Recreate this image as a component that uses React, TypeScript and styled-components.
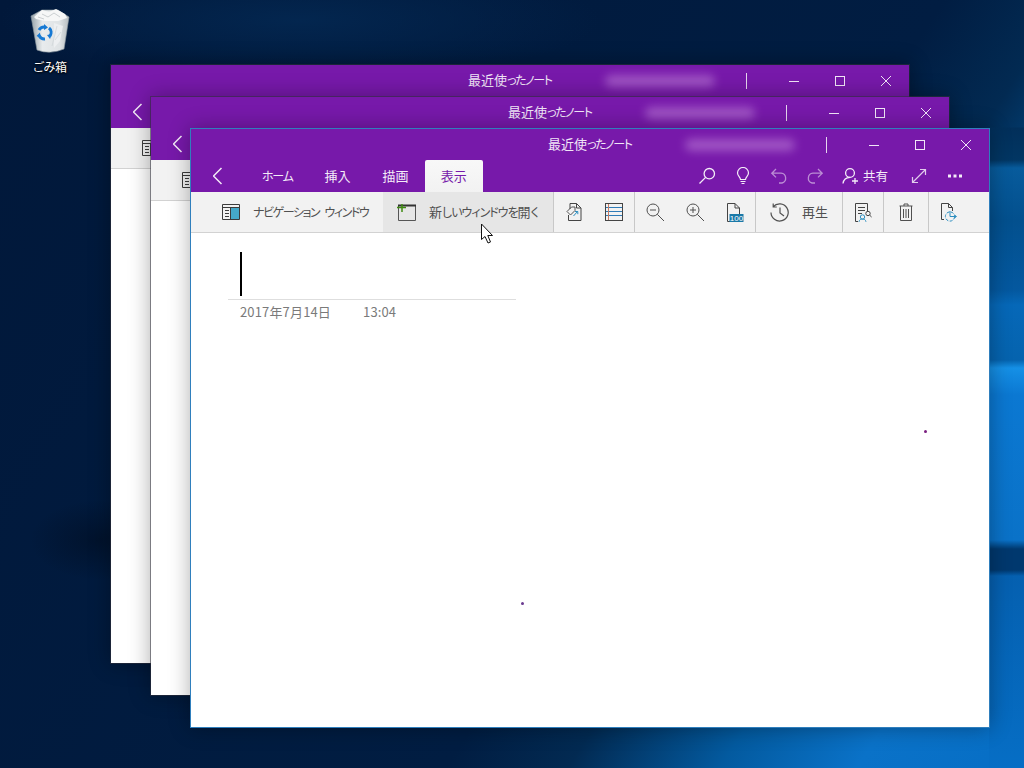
import React from 'react';
import styled, {createGlobalStyle} from 'styled-components';

const GlobalStyle = createGlobalStyle`
  html, body {
    margin: 0;
    padding: 0;
    overflow: hidden;
  }
  body {
    font-family: "Noto Sans CJK JP", "Liberation Sans", sans-serif;
    font-feature-settings: "palt";
  }
`

const PURPLE = '#7719aa'

const Desktop = styled.div`
  position: relative;
  width: 1024px;
  height: 768px;
  overflow: hidden;
  background:
    linear-gradient(180deg, transparent 127px, #022f5a 128px, #023663 160px, #075b9c 168px, #03508e 220px, #04589f 290px, #0668b8 305px, #0563ae 360px, #1590e6 368px, #0b78d2 395px, #0a72c8 540px, #00386e 549px, #00386e 570px, #0560b0 576px, #066ec5 768px) right top / 35px 100% no-repeat,
    radial-gradient(ellipse 70px 40px at 100px 540px, rgba(0, 12, 30, .55) 0%, transparent 100%),
    radial-gradient(ellipse 300px 60px at 300px 20px, #03264f 0%, transparent 100%),
    linear-gradient(123deg, #01183a 0%, #011d42 62%, #022a52 70%, #035a9f 80%, #0a72c8 89%, #066ec5 100%);
`

const BinShortcut = styled.div`
  position: absolute;
  left: 24px;
  top: 8px;
  width: 52px;
  display: flex;
  flex-direction: column;
  align-items: center;
`

const BinLabel = styled.span`
  margin-top: 6px;
  font-size: 12px;
  line-height: 16px;
  letter-spacing: -.2px;
  color: #fff;
  text-shadow: 0 1px 2px #000, 0 0 2px #000;
`

const WindowFrame = styled.div<{$left: number; $top: number; $active?: boolean}>`
  position: absolute;
  left: ${p => p.$left}px;
  top: ${p => p.$top}px;
  width: 800px;
  height: 600px;
  box-sizing: border-box;
  display: flex;
  flex-direction: column;
  border: 1px solid ${p => p.$active ? '#2f7fbd' : 'rgba(50, 50, 60, .55)'};
  box-shadow: 0 0 20px rgba(0, 0, 0, .32);
  background: #fff;
  background-clip: padding-box;
`

// narrower kana next to the 13px kanji, the way the original UI font sets them
const Kana = styled.span<{$track: number}>`
  font-size: 12px;
  letter-spacing: ${p => p.$track}px;
  word-spacing: 4px;
`

const TitleBar = styled.div`
  height: 31px;
  flex: none;
  display: flex;
  align-items: center;
  background: ${PURPLE};
  color: #f1e6f7;
`

const Title = styled.span`
  margin-left: 357px;
  padding-bottom: 2px;
  width: 100px;
  font-size: 13px;
  white-space: nowrap;
`

const AccountBlur = styled.div`
  margin-left: 37px;
  width: 110px;
  height: 12px;
  border-radius: 6px;
  background: #a860ca;
  opacity: .85;
  filter: blur(5px);
`

const TitleDivider = styled.div`
  margin-left: 31px;
  width: 1px;
  height: 16px;
  background: #e6d6ee;
`

const CaptionButtons = styled.div`
  margin-left: auto;
  display: flex;
`

const CaptionButton = styled.div`
  width: 46px;
  height: 31px;
  display: flex;
  align-items: center;
  justify-content: center;
`

const TabRow = styled.div`
  height: 32px;
  flex: none;
  display: flex;
  background: ${PURPLE};
  color: #f4ecf8;
`

const BackButton = styled.div`
  width: 55px;
  display: flex;
  align-items: center;
  justify-content: center;
`

const Tab = styled.div<{$active?: boolean}>`
  padding: 0 16px 2px;
  display: flex;
  align-items: center;
  font-size: 13px;
  border-radius: 2px 2px 0 0;
  background: ${p => p.$active ? 'linear-gradient(#f8f8f8, #f2f2f2)' : 'transparent'};
  color: ${p => p.$active ? PURPLE : 'inherit'};
`

const QuickActions = styled.div`
  margin-left: auto;
  padding-right: 16px;
  display: flex;
`

const QuickButton = styled.div<{$dim?: boolean}>`
  width: 36px;
  display: flex;
  align-items: center;
  justify-content: center;
  opacity: ${p => p.$dim ? .55 : 1};
`

const ShareButton = styled.div`
  padding: 0 13px 0 9px;
  display: flex;
  align-items: center;
  gap: 3px;
  font-size: 12px;
`

const ShareLabel = styled.span`
  font-size: 12.5px;
  padding-bottom: 2px;
`

const Toolbar = styled.div`
  height: 41px;
  flex: none;
  box-sizing: border-box;
  display: flex;
  background: #f2f2f2;
  border-bottom: 1px solid #d2d2d2;
  color: #505050;
`

const ToolGroup = styled.div<{$last?: boolean}>`
  display: flex;
  border-right: ${p => p.$last ? 'none' : '1px solid #c8c8c8'};
`

const LabelButton = styled.div<{$width: number; $pad: number; $gap: number; $hover?: boolean}>`
  width: ${p => p.$width}px;
  padding-left: ${p => p.$pad}px;
  box-sizing: border-box;
  display: flex;
  align-items: center;
  gap: ${p => p.$gap}px;
  font-size: 13px;
  white-space: nowrap;
  background: ${p => p.$hover ? '#e6e6e6' : 'transparent'};
`

const ButtonText = styled.span`
  padding-bottom: 2px;
`

const IconButton = styled.div<{$width?: number}>`
  width: ${p => p.$width || 40}px;
  display: flex;
  align-items: center;
  justify-content: center;
`

const NoteBody = styled.div`
  position: relative;
  flex: 1;
  padding: 19px 0 0 37px;
  background: #fff;
`

const NoteTitle = styled.div`
  width: 288px;
  padding: 0 0 3px 12px;
  box-sizing: border-box;
  border-bottom: 1px solid #dedede;
`

const Caret = styled.div`
  width: 2px;
  height: 44px;
  background: #000;
`

const NoteMeta = styled.div`
  margin: 3px 0 0 12px;
  display: flex;
  gap: 32px;
  font-size: 13px;
  line-height: 18px;
  letter-spacing: .15px;
  color: #7a7a7a;
`

const InkDot = styled.div<{$left: number; $top: number; $color: string}>`
  position: absolute;
  left: ${p => p.$left}px;
  top: ${p => p.$top}px;
  width: 3px;
  height: 3px;
  border-radius: 50%;
  background: ${p => p.$color};
`

const Pointer = styled.svg`
  position: absolute;
  left: 480px;
  top: 223px;
`

const Ico = styled.svg`
  display: block;
  flex: none;
  fill: none;
  stroke: currentColor;
  stroke-width: 1;
`

const ChevronLeft = () => (
    <Ico width="12" height="18" viewBox="0 0 12 18" style={{strokeWidth: 1.5}}><path d="M8.5 1 L.5 9 L8.5 17"/></Ico>
)

const IconSearch = () => (
    <Ico width="18" height="18" viewBox="0 0 18 18" style={{strokeWidth: 1.3}}><circle cx="11.3" cy="6.7" r="5.2"/><path d="M7.6 10.4 L1.5 16.5"/></Ico>
)
const IconBulb = () => (
    <Ico width="18" height="18" viewBox="0 0 18 18" style={{strokeWidth: 1.2}}><path d="M6.5 12.5 C6.5 10 3.5 9 3.5 6 a5.5 5.5 0 0 1 11 0 C14.5 9 11.5 10 11.5 12.5 Z M6.5 14.5 h5 M7.5 16.5 h3"/></Ico>
)
const IconUndo = () => (
    <Ico width="18" height="18" viewBox="0 0 18 18" style={{strokeWidth: 1.3}}><path d="M6 2 L1.8 6.2 L6 10.4 M2 6.2 H11 a5 5 0 0 1 1 9.8 H9"/></Ico>
)
const IconRedo = () => (
    <Ico width="18" height="18" viewBox="0 0 18 18" style={{strokeWidth: 1.3}}><path d="M12 2 L16.2 6.2 L12 10.4 M16 6.2 H7 a5 5 0 0 0 -1 9.8 H9"/></Ico>
)
const IconPerson = () => (
    <Ico width="18" height="18" viewBox="0 0 18 18" style={{strokeWidth: 1.3}}><circle cx="8" cy="6" r="4.4"/><path d="M1 16.5 C1.5 13 4 10.5 8 10.4 M13 11 v6 M10 14 h6"/></Ico>
)
const IconExpand = () => (
    <Ico width="18" height="18" viewBox="0 0 18 18" style={{strokeWidth: 1.2, opacity: .85}}><path d="M2.5 15.5 L15.5 2.5 M10 2.5 H15.5 V8 M2.5 10 V15.5 H8"/></Ico>
)
const IconMore = () => (
    <Ico width="14" height="4" viewBox="0 0 14 4"><path d="M0 0.5 h3 v3 h-3 Z M5.5 0.5 h3 v3 h-3 Z M11 0.5 h3 v3 h-3 Z" fill="currentColor" stroke="none"/></Ico>
)

const IconNav = () => (
    <Ico width="18" height="16" viewBox="0 0 18 16">
        <rect x="8.5" y="3.5" width="9" height="12" fill="#45a9c9" stroke="none"/>
        <path d="M.5 .5 H17.5 V15.5 H.5 Z M.5 3.5 H17.5 M8.5 3.5 V15.5 M3 6.5 H7 M3 9.5 H7 M3 12.5 H7" stroke="#3c3c3c"/>
    </Ico>
)
const IconNewWindow = () => (
    <Ico width="19" height="17" viewBox="0 0 19 17">
        <path d="M1.5 1.5 H18.5 V16.5 H1.5 Z" stroke="#555"/>
        <path d="M1 1.5 H19" stroke="#333" strokeWidth="2"/>
        <path d="M5 0 V8 M0 3.5 H9" stroke="#3f8a12" strokeWidth="1.5"/>
    </Ico>
)
const IconPageTag = () => (
    <Ico width="16" height="18" viewBox="0 0 16 18" stroke="#444">
        <path d="M4 6 V.5 H10.5 L15 5 V17.5 H2.5 V12 M10.5 .5 V5 H15" stroke="#444"/>
        <path d="M1 8.5 L5.5 4 H9 V7.5 L4.5 12 Z" stroke="#555"/>
        <path d="M7.5 13 L11.5 8.5 M9 8.5 H11.8 V11.2" stroke="#2d8fc0"/>
    </Ico>
)
const IconSections = () => (
    <Ico width="18" height="18" viewBox="0 0 18 18">
        <rect x=".5" y=".5" width="17" height="17" stroke="#444"/>
        <path d="M1 4.5 H17 M1 8.5 H17 M1 12.5 H17" stroke="#2f7cb8"/>
        <path d="M3.5 1 V17" stroke="#c57a62"/>
    </Ico>
)
const IconZoomOut = () => (
    <Ico width="19" height="19" viewBox="0 0 19 19" stroke="#555"><circle cx="7" cy="7" r="6"/><path d="M4 7 H10 M11.3 11.3 L18 18"/></Ico>
)
const IconZoomIn = () => (
    <Ico width="19" height="19" viewBox="0 0 19 19" stroke="#555"><circle cx="7" cy="7" r="6"/><path d="M4 7 H10 M7 4 V10 M11.3 11.3 L18 18"/></Ico>
)
const IconPage100 = () => (
    <Ico width="18" height="19" viewBox="0 0 18 19">
        <path d="M1.5 13 V.5 H9 L13.5 5 V11 M9 .5 V5 H13.5 M1.5 13 V18.5 H4" stroke="#444"/>
        <rect x="3.5" y="11" width="14" height="8" fill="#1a79a8" stroke="none"/>
        <text x="10.5" y="17.8" fill="#fff" stroke="none" fontSize="8" textAnchor="middle" fontFamily="Liberation Sans, sans-serif">100</text>
    </Ico>
)
const IconHistory = () => (
    <Ico width="19" height="19" viewBox="0 0 19 19" stroke="#555" style={{strokeWidth: 1.2}}>
        <path d="M3.2 3.7 A8.6 8.6 0 1 1 1 9.5 M3.2 .5 V4 H6.8 M10 4.5 V10 L14 13"/>
    </Ico>
)
const IconAuthor = () => (
    <Ico width="18" height="19" viewBox="0 0 18 19">
        <path d="M4 18.5 H1.5 V.5 H13.5 V8 M4 4.5 H11 M4 7.5 H11 M4 10.5 H8" stroke="#444"/>
        <circle cx="14" cy="10.5" r="2.2" stroke="#444"/>
        <path d="M15.8 12.3 L17.6 14" stroke="#444"/>
        <circle cx="8.5" cy="14" r="2.2" stroke="#2d8fc0"/>
        <path d="M5 18.8 C5.5 16.5 7 16 8.5 16 C10 16 11.5 16.5 12 18.8" stroke="#2d8fc0"/>
    </Ico>
)
const IconTrash = () => (
    <Ico width="14" height="18" viewBox="0 0 14 18" stroke="#444">
        <path d="M.5 3 H13.5 M5 3 V1 H9 V3 M1.5 3 V17.5 H12.5 V3 M4.5 6 V15 M7 6 V15 M9.5 6 V15"/>
    </Ico>
)
const IconPageClock = () => (
    <Ico width="18" height="19" viewBox="0 0 18 19">
        <path d="M1.5 16.5 V.5 H8.5 L12.5 4.5 V8 M8.5 .5 V4.5 H12.5 M1.5 16.5 H4" stroke="#444"/>
        <circle cx="10" cy="13.5" r="4.6" stroke="#2d8fc0" strokeDasharray="3 1.4"/>
        <path d="M10 8 V13.5 H16 M14.5 12 L16.5 13.5 L14.5 15" stroke="#2d8fc0"/>
    </Ico>
)

const IconMinimize = () => <Ico width="10" height="10" viewBox="0 0 10 10"><path d="M0 5.5 H10"/></Ico>
const IconMaximize = () => <Ico width="10" height="10" viewBox="0 0 10 10"><rect x=".5" y=".5" width="9" height="9"/></Ico>
const IconClose = () => <Ico width="10" height="10" viewBox="0 0 10 10"><path d="M0 0 L10 10 M10 0 L0 10"/></Ico>

const RecycleBinIcon = () => (
    <svg width="40" height="45" viewBox="0 0 40 45">
        <defs>
            <linearGradient id="binBody" x1="0" y1="0" x2="1" y2="0">
                <stop offset="0" stopColor="#98a3aa"/>
                <stop offset=".3" stopColor="#e8ebed"/>
                <stop offset=".75" stopColor="#dfe3e5"/>
                <stop offset="1" stopColor="#b5bcc0"/>
            </linearGradient>
        </defs>
        <path d="M1 8 L12 2 L28 2 L39 9 L34 41 Q20 47 7 42 Z" fill="url(#binBody)" stroke="#8f9aa1" strokeWidth=".6"/>
        <path d="M4 9 L12 2 L19 4 L26 1 L35 6 L37 10 L28 13 L15 13 L6 11 Z" fill="#f6f7f7"/>
        <path d="M12 6 L18 9 L24 5 L30 9 M8 9 L14 11" stroke="#bfc4c7" strokeWidth=".8" fill="none"/>
        <path d="M24 15 L33 18 L30 33 L24 40 Z" fill="#f2f4f5" opacity=".7"/>
        <path d="M27 18 L22 38 M31 24 L25 32" stroke="#cfd4d7" strokeWidth=".7" fill="none"/>
        <g fill="none" stroke="#1679d4" strokeWidth="3">
            <path d="M9 22 A6 6 0 0 1 15 19"/>
            <path d="M19 20 A6 6 0 0 1 20 28"/>
            <path d="M15 31 A6 6 0 0 1 9 27"/>
        </g>
        <path d="M14 16 L18 19.5 L14 22 Z M22 26 L20 31 L17 27 Z M10.5 30 L6.5 28 L10 24.5 Z" fill="#1679d4"/>
    </svg>
)

type WindowProps = {
    left: number
    top: number
    active?: boolean
    children?: React.ReactNode
}

// the rear windows only show what the front one leaves uncovered: title bar, back arrow, first toolbar icon
const AppWindow = ({left, top, active, children}: WindowProps) => {
    return (
        <WindowFrame $left={left} $top={top} $active={active}>
            <TitleBar>
                <Title>最近使<Kana $track={-1.4}>ったノート</Kana></Title>
                <AccountBlur/>
                <TitleDivider/>
                <CaptionButtons>
                    <CaptionButton><IconMinimize/></CaptionButton>
                    <CaptionButton><IconMaximize/></CaptionButton>
                    <CaptionButton><IconClose/></CaptionButton>
                </CaptionButtons>
            </TitleBar>
            <TabRow>
                <BackButton><ChevronLeft/></BackButton>
                {active && <>
                    <Tab><Kana $track={-1.25}>ホーム</Kana></Tab>
                    <Tab>挿入</Tab>
                    <Tab>描画</Tab>
                    <Tab $active>表示</Tab>
                    <QuickActions>
                        <QuickButton><IconSearch/></QuickButton>
                        <QuickButton><IconBulb/></QuickButton>
                        <QuickButton $dim><IconUndo/></QuickButton>
                        <QuickButton $dim><IconRedo/></QuickButton>
                        <ShareButton><IconPerson/><ShareLabel>共有</ShareLabel></ShareButton>
                        <QuickButton><IconExpand/></QuickButton>
                        <QuickButton><IconMore/></QuickButton>
                    </QuickActions>
                </>}
            </TabRow>
            <Toolbar>
                <LabelButton $width={192} $pad={31} $gap={13}>
                    <IconNav/>
                    {active && <ButtonText><Kana $track={-1.45}>ナビゲーション ウィンドウ</Kana></ButtonText>}
                </LabelButton>
                {active && <>
                    <ToolGroup>
                        <LabelButton $width={170} $pad={14} $gap={13} $hover>
                            <IconNewWindow/>
                            <ButtonText>新<Kana $track={-1}>しいウィンドウを</Kana>開<Kana $track={0}>く</Kana></ButtonText>
                        </LabelButton>
                    </ToolGroup>
                    <ToolGroup>
                        <IconButton><IconPageTag/></IconButton>
                        <IconButton><IconSections/></IconButton>
                    </ToolGroup>
                    <ToolGroup>
                        <IconButton><IconZoomOut/></IconButton>
                        <IconButton><IconZoomIn/></IconButton>
                        <IconButton><IconPage100/></IconButton>
                    </ToolGroup>
                    <ToolGroup>
                        <LabelButton $width={86} $pad={14} $gap={13}><IconHistory/><ButtonText>再生</ButtonText></LabelButton>
                    </ToolGroup>
                    <ToolGroup>
                        <IconButton><IconAuthor/></IconButton>
                    </ToolGroup>
                    <ToolGroup>
                        <IconButton $width={44}><IconTrash/></IconButton>
                    </ToolGroup>
                    <ToolGroup $last>
                        <IconButton><IconPageClock/></IconButton>
                    </ToolGroup>
                </>}
            </Toolbar>
            <NoteBody>{children}</NoteBody>
        </WindowFrame>
    )
}

const App = () => {
    return (
        <Desktop>
            <GlobalStyle/>
            <BinShortcut>
                <RecycleBinIcon/>
                <BinLabel>ごみ箱</BinLabel>
            </BinShortcut>
            <AppWindow left={110} top={64}/>
            <AppWindow left={150} top={96}/>
            <AppWindow left={190} top={128} active>
                <NoteTitle><Caret/></NoteTitle>
                <NoteMeta>
                    <span>2017年7月14日</span>
                    <span>13:04</span>
                </NoteMeta>
                <InkDot $left={733} $top={197} $color="#7a1f80"/>
                <InkDot $left={330} $top={369} $color="#6a3a90"/>
            </AppWindow>
            <Pointer width="14" height="21" viewBox="0 0 14 21">
                <path d="M1.5 1 V16.5 L5 13.5 L8 20 L10.5 19 L7.8 12.5 L12.5 12.5 Z" fill="#fff" stroke="#111" strokeWidth="1"/>
            </Pointer>
        </Desktop>
    );
};

export default App;
